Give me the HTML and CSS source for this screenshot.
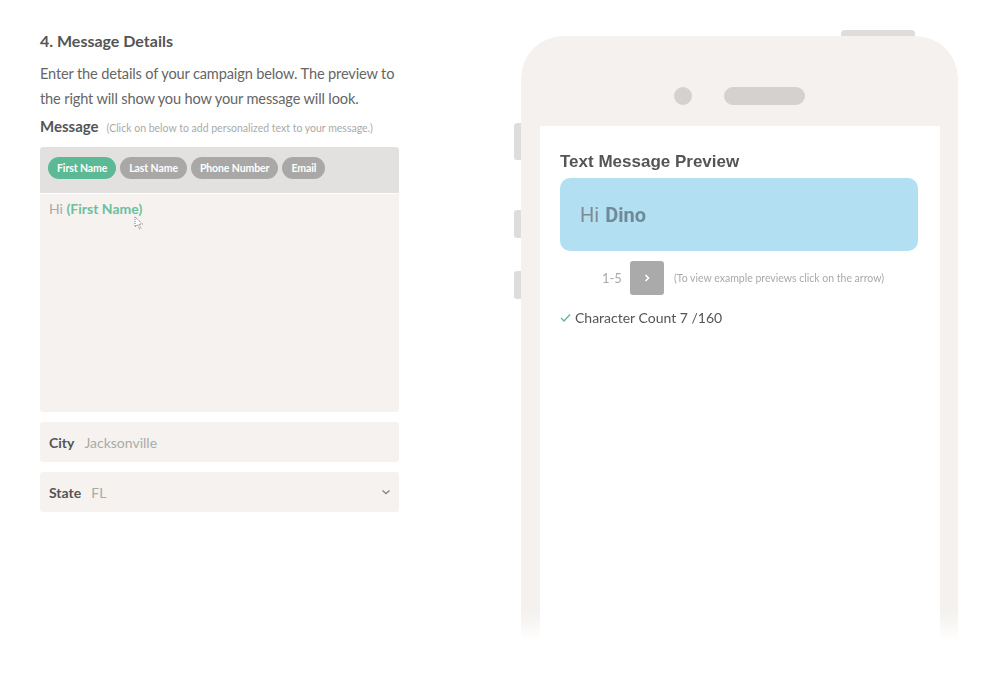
FILE: index.html
```html
<!DOCTYPE html>
<html>
<head>
<meta charset="utf-8">
<link rel="stylesheet" href="styles.css">
</head>
<body>
<div class="page">
  <section class="form">
    <h2 class="title">4. Message Details</h2>
    <p class="intro">Enter the details of your campaign below. The preview to the right will show you how your message will look.</p>
    <div class="msg-label"><span class="lbl">Message</span><span class="hint">(Click on below to add personalized text to your message.)</span></div>
    <div class="editor">
      <div class="tags">
        <span class="tag active">First Name</span>
        <span class="tag">Last Name</span>
        <span class="tag">Phone Number</span>
        <span class="tag">Email</span>
      </div>
      <div class="textarea"><span class="hi">Hi </span><span class="var">(First Name)</span><svg class="cursor" width="10" height="14" viewBox="0 0 10 14"><path d="M1 1 L1 11 L3.5 8.5 L5.5 13 L7 12.3 L5 8 L8.5 8 Z" fill="#fff" stroke="#777" stroke-width="1" stroke-dasharray="1 1"/></svg></div>
    </div>
    <div class="field"><span class="flabel">City</span><span class="fvalue">Jacksonville</span></div>
    <div class="field"><span class="flabel">State</span><span class="fvalue">FL</span><svg class="chev" width="10" height="6" viewBox="0 0 10 6"><path d="M1.5 1.5 L5 4.5 L8.5 1.5" fill="none" stroke="#888" stroke-width="1.5"/></svg></div>
  </section>
  <section class="phone">
    <span class="btn-top"></span>
    <span class="btn-side b1"></span>
    <span class="btn-side b2"></span>
    <span class="btn-side b3"></span>
    <div class="phone-body">
      <div class="bezel"><span class="camera"></span><span class="speaker"></span></div>
      <div class="screen">
        <h3 class="ptitle">Text Message Preview</h3>
        <div class="bubble">Hi <b>Dino</b></div>
        <div class="pager">
          <span class="range">1-5</span>
          <span class="next"><svg width="8" height="10" viewBox="0 0 8 10"><path d="M2.5 2 L5.5 5 L2.5 8" fill="none" stroke="#fff" stroke-width="1.6"/></svg></span>
          <span class="pnote">(To view example previews click on the arrow)</span>
        </div>
        <div class="count"><svg width="11" height="9" viewBox="0 0 11 9"><path d="M1 5 L4 8 L10 1.5" fill="none" stroke="#5bb995" stroke-width="1.3"/></svg><span>Character Count 7 /160</span></div>
      </div>
    </div>
  </section>
</div>
</body>
</html>
```
FILE: styles.css
```css
* { box-sizing: border-box; }
html, body { margin: 0; padding: 0; background: #fff; }
body { font-family: Lato, "Open Sans", sans-serif; color: #555; width: 1000px; height: 683px; overflow: hidden; }
.page { display: flex; align-items: flex-start; padding-left: 40px; }
.form { width: 359px; padding-top: 31px; }
.title { margin: 0; font-size: 16px; font-weight: 700; line-height: 20px; color: #555; }
.intro { margin: 10px 0 0; width: 370px; font-size: 14.6px; letter-spacing: -0.15px; line-height: 25px; color: #666; }
.msg-label { margin-top: 6px; display: flex; align-items: baseline; height: 22px; }
.lbl { font-size: 15px; font-weight: 700; color: #555; }
.hint { font-size: 10.5px; color: #aaa; margin-left: 8px; }
.editor { margin-top: 8px; border-radius: 3px; overflow: hidden; }
.tags { background: #e2e1df; height: 46px; display: flex; align-items: center; gap: 4px; padding: 0 0 4px 8px; }
.tag { height: 22px; line-height: 22px; padding: 0 9px; border-radius: 11px; background: #a9a8a6; color: #fff; font-size: 10.5px; font-weight: 700; letter-spacing: -0.1px; }
.tag.active { background: #5bb995; }
.textarea { background: #f5f2ef; height: 218px; margin-top: 1px; padding: 7px 9px; font-size: 14px; line-height: 16px; position: relative; }
.hi { color: #aaa; }
.var { color: #6cc0a0; font-weight: 700; }
.cursor { position: absolute; left: 94px; top: 22px; }
.field { margin-top: 10px; height: 40px; background: #f5f2ef; border-radius: 3px; display: flex; align-items: center; padding: 0 9px; font-size: 14px; }
.flabel { color: #555; font-weight: 700; margin-right: 10px; }
.fvalue { color: #aaa; flex: 1; }
.chev { margin-right: -1px; }
.phone { position: relative; margin-left: 122px; margin-top: 36px; width: 437px; height: 610px; }
.phone-body { height: 610px; background: #f4f1ee; border-radius: 42px 42px 0 0; -webkit-mask-image: linear-gradient(to bottom, #000 575px, transparent 605px); mask-image: linear-gradient(to bottom, #000 575px, transparent 605px); }
.btn-top { position: absolute; top: -6px; left: 320px; width: 74px; height: 10px; background: #dedddb; border-radius: 4px; }
.btn-side { position: absolute; left: -7px; width: 10px; background: #dedddb; border-radius: 3px 0 0 3px; }
.b1 { top: 87px; height: 37px; }
.b2 { top: 174px; height: 28px; }
.b3 { top: 235px; height: 28px; }
.bezel { height: 90px; display: flex; justify-content: center; align-items: center; gap: 32px; padding-top: 30px; }
.camera { width: 18px; height: 18px; border-radius: 50%; background: #d3d2d0; margin-left: -1px; }
.speaker { width: 81px; height: 18px; border-radius: 9px; background: #d3d2d0; }
.screen { margin: 0 18px 0 19px; background: #fff; height: 520px; padding: 26px 22px 0 20px; }
.ptitle { margin: 0; font-family: "Liberation Sans", Arial, sans-serif; font-size: 17px; font-weight: 700; line-height: 20px; color: #555; }
.bubble { margin-top: 6px; height: 73px; background: #b2e0f2; border-radius: 10px; padding-left: 20px; display: flex; align-items: center; font-family: Roboto, "Liberation Sans", sans-serif; font-size: 20px; color: #7d8a90; }
.bubble b { margin-left: 6px; color: #6e8a96; font-weight: 700; }
.pager { margin-top: 10px; display: flex; align-items: center; padding-left: 42px; height: 34px; }
.range { font-size: 13px; color: #aaa; width: 28px; }
.next { width: 34px; height: 34px; border-radius: 3px; background: #aaa; display: flex; align-items: center; justify-content: center; }
.pnote { font-size: 10.5px; color: #aaa; margin-left: 10px; }
.count { margin-top: 14px; display: flex; align-items: center; gap: 4px; font-size: 14px; color: #555; }
```
